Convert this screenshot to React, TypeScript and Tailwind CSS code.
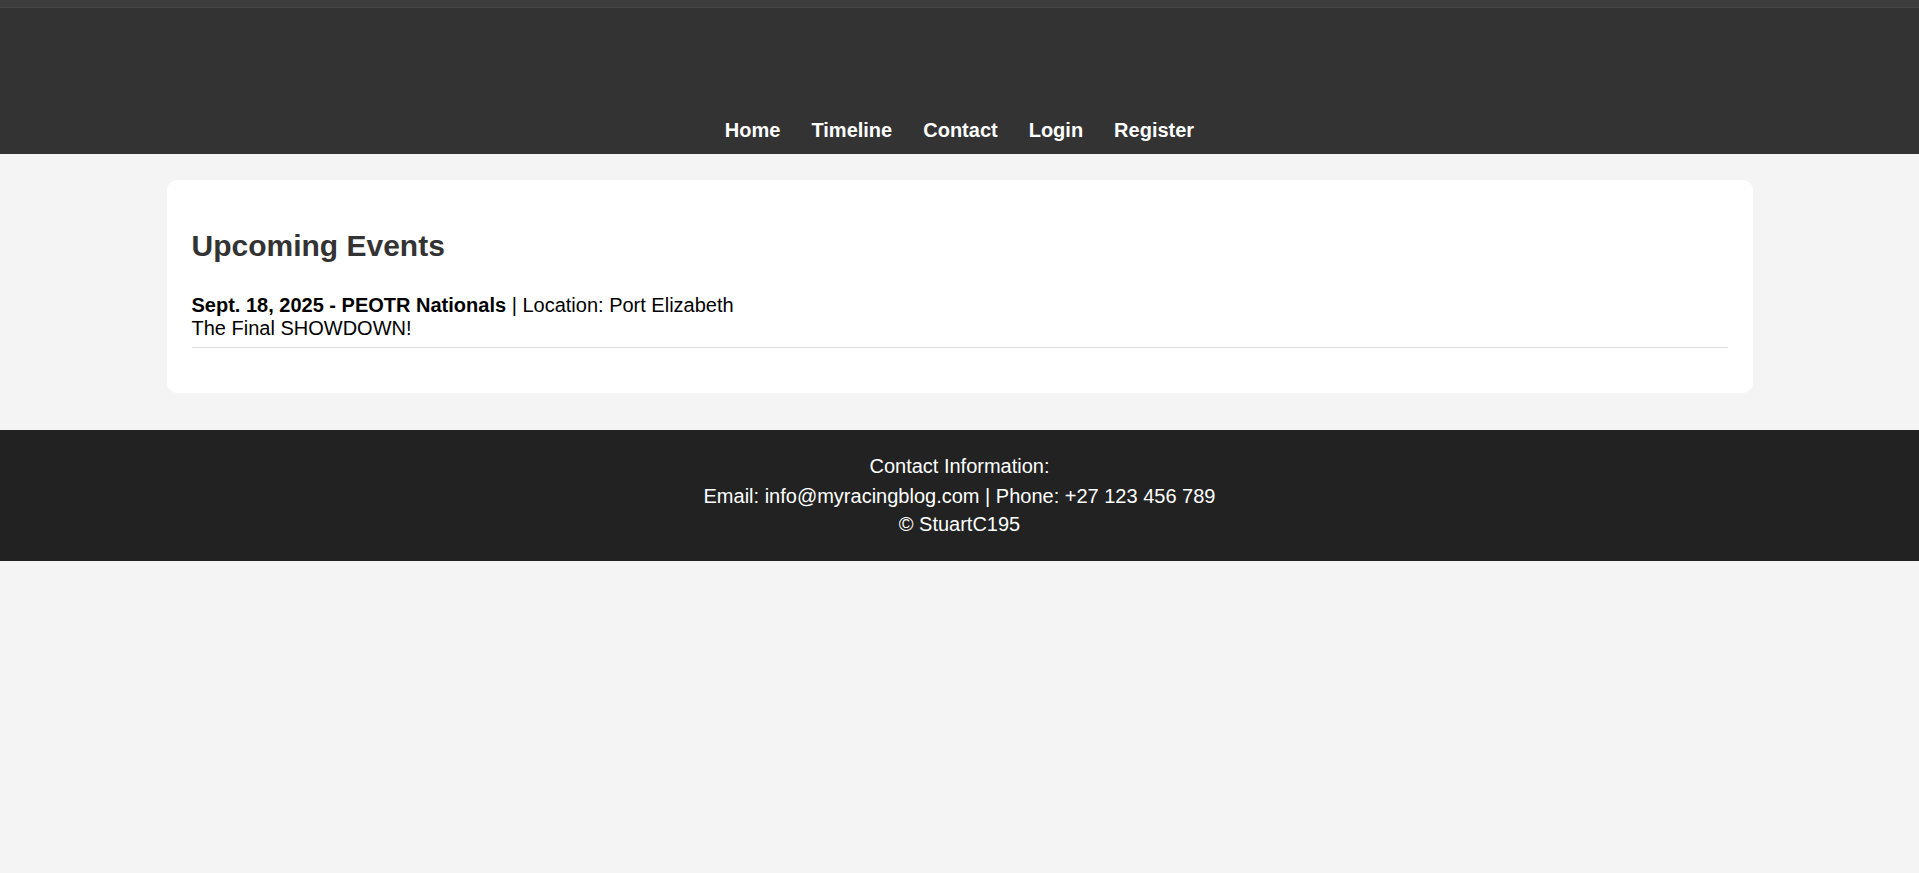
const navLinks = ["Home", "Timeline", "Contact", "Login", "Register"];

const events = [
  {
    date: "Sept. 18, 2025",
    name: "PEOTR Nationals",
    location: "Port Elizabeth",
    description: "The Final SHOWDOWN!",
  },
];

function Header() {
  return (
    <header className="bg-[#333333]">
      <div className="h-[8px] bg-[#3d3d3d] border-b border-[#454545]" />
      <nav className="h-[146px] flex items-end justify-center pb-[10px]">
        <ul className="flex gap-[31px]">
          {navLinks.map((link) => (
            <li key={link}>
              <a href="#" className="text-white font-bold text-[20px] leading-[23px]">
                {link}
              </a>
            </li>
          ))}
        </ul>
      </nav>
    </header>
  );
}

function EventList() {
  return (
    <ul className="mt-[20px] mb-[20px]">
      {events.map((event) => (
        <li
          key={event.name}
          className="pt-[11px] pb-[7px] border-b border-[#dddddd] text-[20px] leading-[23px] text-black"
        >
          <strong>
            {event.date} - {event.name}
          </strong>{" "}
          | Location: {event.location}
          <br />
          {event.description}
        </li>
      ))}
    </ul>
  );
}

export default function App() {
  return (
    <div className="min-h-[873px] bg-[#f4f4f4]" style={{ fontFamily: '"Liberation Sans", Arial, sans-serif' }}>
      <Header />

      <main className="pt-[26px] pb-[37px]">
        <section className="w-[1586px] mx-auto bg-white rounded-[10px] px-[25px] pt-[25px] pb-[25px]">
          <h2 className="mt-[24px] text-[30px] leading-[34px] font-bold text-[#333333]">Upcoming Events</h2>
          <EventList />
        </section>
      </main>

      <footer className="bg-[#222222] text-white text-center text-[20px] pt-[22px] pb-[23px]">
        <p className="leading-[28px]">Contact Information:</p>
        <p className="leading-[28px] mt-[2px]">Email: info@myracingblog.com | Phone: +27 123 456 789</p>
        <p className="leading-[28px]">&copy; StuartC195</p>
      </footer>
    </div>
  );
}
